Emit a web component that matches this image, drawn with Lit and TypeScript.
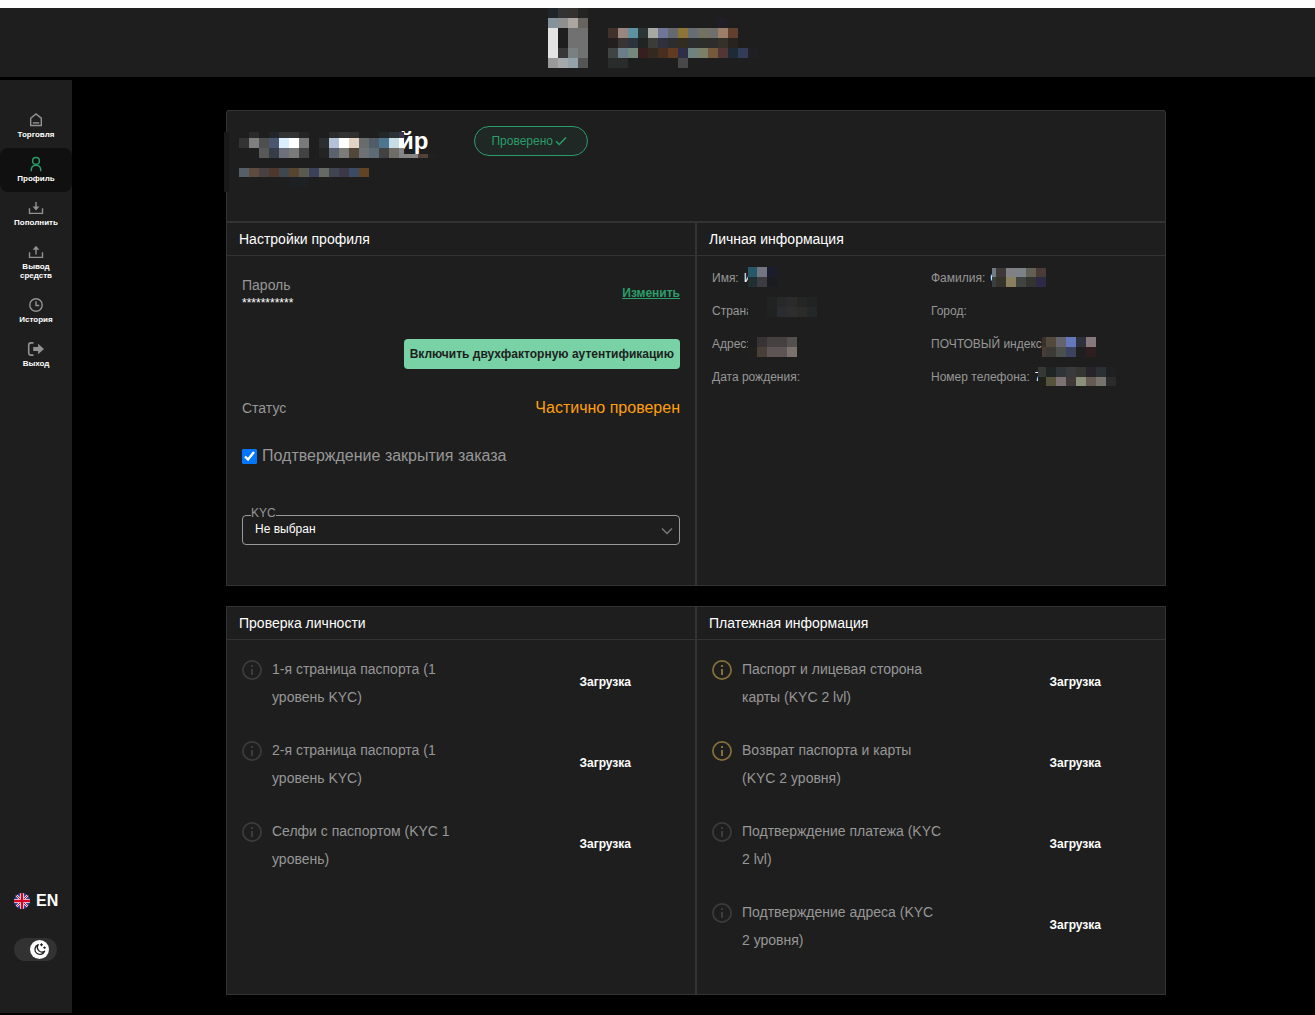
import { LitElement, html, svg, css } from "lit";
import { customElement, property, state } from "lit/decorators.js";
import { classMap } from "lit/directives/class-map.js";

interface Row {
  y: number;
  h: number;
  x?: number;
  /** Width of the first cell; the others are 10 wide. */
  first?: number;
  cells: string;
}

/** Pixelated cover for private data. "-" leaves a cell open. */
@customElement("pixel-cover")
class PixelCover extends LitElement {
  static styles = css`
    :host { display: block; }
    .cover { display: block; }
  `;
  @property({ attribute: false }) rows: Row[] = [];

  render() {
    let width = 0;
    let height = 0;
    const rects: unknown[] = [];
    for (const row of this.rows) {
      let x = row.x ?? 0;
      row.cells.split(" ").forEach((c, i) => {
        const w = i === 0 ? row.first ?? 10 : 10;
        if (c !== "-") rects.push(svg`<rect x=${x} y=${row.y} width=${w} height=${row.h} fill=${"#" + c}></rect>`);
        x += w;
      });
      width = Math.max(width, x);
      height = Math.max(height, row.y + row.h);
    }
    return html`<svg class="cover" width=${width} height=${height} shape-rendering="crispEdges" aria-hidden="true">${rects}</svg>`;
  }
}

const LOGO: Row[] = [
  { y: 0, h: 10, cells: "1f2528 333333 333230 242423" },
  { y: 10, h: 10, cells: "84929c 8f8f8f aba7a0 67645f" },
  { y: 20, h: 20, cells: "e3e3e3 1e1e1e 717171 717171" },
  { y: 40, h: 10, cells: "e3e3e3 383838 7a7f80 717171" },
  { y: 50, h: 10, cells: "999999 a5a9ab 93a2ab 555555" },
  { y: 10, h: 10, x: 169, cells: "211e29" },
  { y: 20, h: 10, x: 60, cells: "41312c 9b867f 5e92a2 2c3536 a9a9a3 6f7699 676971 8e7437 666d74 737161 706f6b 9b7d68 623f2e" },
  { y: 30, h: 10, x: 60, cells: "231f1f 393433 2b343a 212423 3b3c3a 2f303a 2c2d2d 332d21 2b2d2f 2d2d2a 2d2d2c 35302a 28231f" },
  { y: 40, h: 10, x: 60, cells: "404544 6a7e89 74887b 371f20 33291f 482d21 613a22 2e2e49 70827d 7d8069 74593a 523535 1e2b37 323c58 202024" },
  { y: 50, h: 10, x: 60, cells: "2a2c2c 2a2c2c - - - - - 484848" },
];

const NAME: Row[] = [
  { y: 0, h: 60, first: 5, cells: "191919" },
  { y: 0, h: 6, x: 15, cells: "- 2a2a2a - 22262a 333333 333333 252525 - - 2b2b2b 333333 302f2e - - 222729 2b3236" },
  { y: 6, h: 10, x: 15, cells: "333333 7f7f7f 4f4f50 4a5570 dceffc ffffff 7a7a7a - 2b2d30 b3c2d8 fffefd e1d4c4 6a6b6d 515c66 4d758d c8dce6" },
  { y: 0, h: 6, x: 175, first: 5, cells: "3b3350" },
  { y: 6, h: 10, x: 175, first: 5, cells: "ffffff" },
  { y: 16, h: 10, x: 35, cells: "585858 373d48 6d707a 7a7a7a 434343 - 242425 5b626e 7c7b79 53473b 6e7276 5c6b76 424242 706c68" },
  { y: 16, h: 10, x: 175, first: 5, cells: "858585" },
  { y: 22, h: 4, x: 180, first: 14, cells: "858585 52423a 22201f" },
  { y: 36, h: 9, x: 15, cells: "546067 5d4b3f 474241 4e382d 3e474d 584530 5b5a50 3b4158 676a64 40454f 3c3845 3c4b65 614325" },
  { y: 45, h: 10, x: 65, cells: "1d2124 1d2124" },
];

interface Field {
  label: string;
  value?: string;
  cover?: string;
  rows?: Row[];
}

const FIELDS: Field[] = [
  { label: "Имя:", value: "И", cover: "first", rows: [
    { y: 0, h: 10, first: 9, cells: "27586a 737580 1b1d2e" },
    { y: 10, h: 10, first: 9, cells: "1f3035 3c3b41 1b1c22" } ] },
  { label: "Фамилия:", value: "С", cover: "last", rows: [
    { y: 0, h: 9, first: 4, cells: "6f7b80 3e3838 808085 7c8386 625f54 4a3b37" },
    { y: 9, h: 10, first: 4, cells: "3a4040 36332d 88805e 424444 33332f 2d2a47" } ] },
  { label: "Страна:", cover: "country", rows: [
    { y: 0, h: 10, first: 9, cells: "1e1e1e 1e1e1e 212323 272829 2b2b2b 252524 212322" },
    { y: 10, h: 10, first: 9, cells: "1e1e1e 1e1e1e 202222 292c30 2f2d2d 2b2b2a 242727" } ] },
  { label: "Город:" },
  { label: "Адрес:", cover: "address", rows: [
    { y: 0, h: 10, first: 9, cells: "1e1e1e 383235 454141 454141 555050" },
    { y: 10, h: 10, first: 9, cells: "201f1e 483f39 5d5453 5d5453 7a716c" } ] },
  { label: "ПОЧТОВЫЙ индекс:", cover: "zip", rows: [
    { y: 0, h: 10, first: 4, cells: "3a322a 53493c 65646d 6678bd 2f313a 85797e" },
    { y: 10, h: 10, first: 4, cells: "4a3c35 3c3a37 4b4f4d 3d4260 201f1f 2e1e1f" } ] },
  { label: "Дата рождения:" },
  { label: "Номер телефона:", value: "7", cover: "phone", rows: [
    { y: 0, h: 10, first: 8, cells: "373736 1f2424 2f3438 3a3a3a 343531 28232a 2b3035 202020" },
    { y: 10, h: 9, first: 8, cells: "22201d 55543a 7d7273 3f393a 8a9079 665b52 777470 2c2b2b" } ] },
];

const IDENTITY = [
  { text: "1-я страница паспорта (1 уровень KYC)" },
  { text: "2-я страница паспорта (1 уровень KYC)" },
  { text: "Селфи с паспортом (KYC 1 уровень)" },
];

const PAYMENT = [
  { text: "Паспорт и лицевая сторона карты (KYC 2 lvl)", warn: true },
  { text: "Возврат паспорта и карты (KYC 2 уровня)", warn: true },
  { text: "Подтверждение платежа (KYC 2 lvl)" },
  { text: "Подтверждение адреса (KYC 2 уровня)" },
];

const ICONS = {
  home: svg`<path d="M2.700 6.200 8 1.900l5.300 4.300v7.300H2.700z"></path><path d="M4.800 10.900h6.400"></path>`,
  user: svg`<circle cx="8" cy="4.900" r="3.400"></circle><path d="M3.300 15.200v-1.200C3.300 11 5.200 9.400 8 9.400s4.700 1.600 4.700 4.600v1.200"></path>`,
  deposit: svg`<path d="M1.500 8.200v5.200h13V8.200"></path><path d="M8 2v6"></path><path d="M4.600 6.600h6.800L8 10.600z" fill="currentColor" stroke="none"></path>`,
  withdraw: svg`<path d="M1.500 8.200v5.200h13V8.200"></path><path d="M8 4.500v6"></path><path d="M4.600 5.800h6.800L8 1.700z" fill="currentColor" stroke="none"></path>`,
  history: svg`<circle cx="8" cy="8" r="6.200"></circle><path d="M8 4.200v4.300h3.200"></path>`,
  exit: svg`<path d="M5.500 1.900H3Q.700 1.900.700 4.200v7.600Q.700 14.100 3 14.100h2.500" stroke-width="1.600"></path><path d="M5.200 6h4.900V2.700L16 8l-5.900 5.300V10H5.200z" fill="currentColor" stroke="none"></path>`,
};

const NAV = [
  { icon: ICONS.home, text: "Торговля" },
  { icon: ICONS.user, text: "Профиль", active: true },
  { icon: ICONS.deposit, text: "Пополнить" },
  { icon: ICONS.withdraw, text: "Вывод средств" },
  { icon: ICONS.history, text: "История" },
  { icon: ICONS.exit, text: "Выход" },
];

@customElement("side-nav")
class SideNav extends LitElement {
  static styles = css`
    :host {
      display: flex;
      flex-direction: column;
      width: 72px;
      flex: none;
      background: #1e1e1e;
      padding: 24px 0 52px;
      box-sizing: border-box;
      color: #fff;
    }
    .item {
      display: flex;
      flex-direction: column;
      align-items: center;
      gap: 2px;
      padding: 8px 12px 9px;
      border-radius: 8px;
      color: #fff;
      font-size: 8px;
      line-height: 9px;
      font-weight: 700;
      text-align: center;
      text-decoration: none;
    }
    .active { background: #101010; }
    .icon { display: block; width: 16px; height: 16px; color: #929292; overflow: visible; }
    .active .icon { color: #2a9d6a; }
    .foot {
      margin-top: auto;
      display: flex;
      flex-direction: column;
      gap: 25px;
      padding-left: 14px;
      align-items: flex-start;
    }
    .lang {
      display: flex;
      align-items: center;
      gap: 6px;
      border: 0;
      padding: 0;
      background: none;
      color: #fff;
      font: 700 16px/24px "Liberation Sans", Arial, sans-serif;
    }
    .theme {
      display: flex;
      justify-content: flex-end;
      align-items: center;
      width: 43px;
      height: 23px;
      border: 0;
      border-radius: 12px;
      padding: 0 8px;
      background: #323232;
    }
    .knob { display: block; flex: none; }
  `;

  render() {
    return html`
      <nav>
        ${NAV.map((n) => html`<a href="#" class=${classMap({ item: true, active: !!n.active })}>
          <svg class="icon" viewBox="0 0 16 16" fill="none" stroke="currentColor" stroke-width="1.400" aria-hidden="true">${n.icon}</svg>
          <span>${n.text}</span></a>`)}
      </nav>
      <div class="foot">
        <button class="lang" type="button">
          <svg width="16" height="16" viewBox="0 0 16 16" aria-hidden="true">
            <clipPath id="round"><circle cx="8" cy="8" r="8"></circle></clipPath>
            <g clip-path="url(#round)">
              <rect width="16" height="16" fill="#24489a"></rect>
              <path d="M0 0 16 16M16 0 0 16" stroke="#f0f0f0" stroke-width="2.200"></path>
              <path d="M0 0 16 16M16 0 0 16" stroke="#d80027" stroke-width="1"></path>
              <path d="M8 0v16M0 8h16" stroke="#f0f0f0" stroke-width="4"></path>
              <path d="M8 0v16M0 8h16" stroke="#d80027" stroke-width="2.400"></path>
            </g>
          </svg>
          EN
        </button>
        <button class="theme" type="button" aria-label="Тема">
          <svg class="knob" width="19" height="19" viewBox="0 0 19 19" fill="none" stroke="#1e1e1e" aria-hidden="true">
            <circle cx="9.500" cy="9.500" r="9.500" fill="#fff" stroke="none"></circle>
            <path d="M8.300 4.700a5 5 0 1 0 6.300 6.500 4.600 4.600 0 0 1-6.300-6.500z" stroke-width="1.300" stroke-linejoin="round"></path>
            <path d="M11.500 3.200v3M10 4.700h3M14.500 6.400v2.400M13.300 7.600h2.400" stroke-width="1.100"></path>
          </svg>
        </button>
      </div>
    `;
  }
}

interface Doc { text: string; warn?: boolean; }

@customElement("doc-list")
class DocList extends LitElement {
  static styles = css`
    :host { display: block; }
    .list {
      display: flex;
      flex-direction: column;
      gap: 25px;
      margin: 0;
      padding: 0;
      list-style: none;
    }
    .doc { display: flex; gap: 10px; }
    .info { flex: none; width: 20px; height: 20px; margin-top: 5px; color: #3c3c3c; }
    .warn { color: #84703a; }
    .text { width: 202px; font-size: 14px; line-height: 28px; color: #979797; }
    .upload {
      align-self: center;
      margin: 0 49px 2px auto;
      border: 0;
      padding: 0;
      background: none;
      color: #fff;
      font: 700 12px/16px "Liberation Sans", Arial, sans-serif;
    }
  `;
  @property({ attribute: false }) docs: Doc[] = [];

  render() {
    return html`<ul class="list">
      ${this.docs.map((d) => html`<li class="doc">
        <svg class=${classMap({ info: true, warn: !!d.warn })} viewBox="0 0 20 20" aria-hidden="true">
          <circle cx="10" cy="10" r="9.100" fill="none" stroke="currentColor" stroke-width="1.700"></circle>
          <path d="M9 5h2v2H9zM9 9h2v6H9z" fill="currentColor"></path>
        </svg>
        <span class="text">${d.text}</span>
        <button class="upload" type="button">Загрузка</button>
      </li>`)}
    </ul>`;
  }
}

@customElement("app-root")
class AppRoot extends LitElement {
  static styles = css`
    :host {
      display: flex;
      flex-direction: column;
      gap: 3px;
      min-height: 100vh;
      box-sizing: border-box;
      border-top: 8px solid #fdfdfd;
      padding-bottom: 2px;
      background: #000;
      font-family: "Liberation Sans", Arial, sans-serif;
      color: #fff;
    }
    .top { display: flex; justify-content: center; height: 69px; padding-right: 10px; background: #1e1e1e; }
    .shell { display: flex; flex: 1; }
    .page {
      flex: 1;
      display: flex;
      flex-direction: column;
      align-items: center;
      gap: 20px;
      padding: 30px 20px 18px 25px;
    }
    .card {
      display: grid;
      grid-template-columns: 1fr 1fr;
      width: 100%;
      max-width: 940px;
      background: #1e1e1e;
      border-radius: 3px 3px 0 0;
    }
    .person {
      grid-column: 1 / -1;
      position: relative;
      display: flex;
      align-items: flex-start;
      gap: 46px;
      height: 80px;
      padding: 15px 12px;
      border: 1px solid #333;
      border-radius: 3px 3px 0 0;
    }
    .name { margin: 0; padding-left: 160px; font-size: 24px; line-height: 30px; font-weight: 700; }
    .name-cover { position: absolute; left: -3px; top: 21px; }
    .badge {
      display: flex;
      align-items: center;
      gap: 2px;
      height: 28px;
      padding: 0 20px 0 16px;
      border: 1px solid #2a9d6a;
      border-radius: 15px;
      background: #1f2825;
      color: #2a9d6a;
      font-size: 12px;
    }
    .panel { border: 1px solid #333; min-width: 0; }
    .title {
      margin: 0;
      padding: 0 12px;
      border-bottom: 1px solid #333;
      font-size: 14px;
      line-height: 32px;
      font-weight: 400;
    }
    .body { padding: 19px 15px 40px; font-size: 14px; line-height: 20px; color: #979797; }
    .docs { padding: 15px 15px 40px; }
    .line { display: flex; justify-content: space-between; align-items: center; }
    .stars { display: block; font-size: 12px; line-height: 16px; color: #fff; }
    .change { color: #2a9d6a; font-size: 12px; font-weight: 700; }
    .two-factor {
      display: block;
      margin: 28px 0 29px auto;
      height: 30px;
      border: 0;
      border-radius: 4px;
      padding: 0 6px;
      background: #78d2a5;
      color: #1e1e1e;
      font: 700 12px/20px "Liberation Sans", Arial, sans-serif;
    }
    .state { color: #ff9f0a; font-size: 16px; }
    .confirm { display: flex; align-items: center; gap: 5px; margin-top: 28px; font-size: 16px; }
    .tick { width: 15px; height: 15px; margin: 0; }
    .kyc { position: relative; margin-top: 49px; }
    .kyc-label {
      position: absolute;
      left: 9px;
      top: -9px;
      background: #1e1e1e;
      font-size: 12px;
      line-height: 14px;
    }
    .kyc-select {
      display: block;
      appearance: none;
      width: 100%;
      height: 30px;
      border: 1px solid #999;
      border-radius: 4px;
      padding: 0 12px 3px;
      background: #1e1e1e;
      color: #fff;
      font: 12px "Liberation Sans", Arial, sans-serif;
    }
    .chevron { position: absolute; right: 7px; top: 12px; pointer-events: none; }
    .fields {
      display: grid;
      grid-template-columns: 1fr 1fr;
      gap: 13px 0;
      margin: 0;
      padding: 12px 15px;
      font-size: 12px;
      line-height: 20px;
      color: #979797;
    }
    .field { position: relative; display: flex; gap: 5px; white-space: nowrap; }
    .value { margin: 0; color: #fff; }
    .field-cover { position: absolute; top: 0; left: 36px; }
    .first { top: -1px; }
    .country { top: -4px; }
    .address { top: 3px; }
    .last { left: 61px; }
    .zip { left: 111px; top: 3px; }
    .phone { left: 107px; }
  `;
  @state() private confirm = true;

  render() {
    return html`
      <header class="top"><pixel-cover .rows=${LOGO}></pixel-cover></header>
      <div class="shell">
        <side-nav></side-nav>
        <main class="page">
          <div class="card">
            <div class="person">
              <h1 class="name">йр</h1>
              <pixel-cover class="name-cover" .rows=${NAME}></pixel-cover>
              <span class="badge">Проверено
                <svg width="12" height="10" viewBox="0 0 12 10" fill="none" stroke="currentColor" stroke-width="1.500" aria-hidden="true"><path d="M1 5.200 4.200 8.500 11 1.500"></path></svg>
              </span>
            </div>
            <section class="panel">
              <h2 class="title">Настройки профиля</h2>
              <div class="body">
                <div class="line">
                  <div>Пароль<span class="stars">***********</span></div>
                  <a class="change" href="#">Изменить</a>
                </div>
                <button class="two-factor" type="button">Включить двухфакторную аутентификацию</button>
                <div class="line"><span>Статус</span><span class="state">Частично проверен</span></div>
                <label class="confirm">
                  <input class="tick" type="checkbox" .checked=${this.confirm}
                    @change=${(e: Event) => (this.confirm = (e.target as HTMLInputElement).checked)} />
                  Подтверждение закрытия заказа
                </label>
                <div class="kyc">
                  <select class="kyc-select" id="kyc"><option>Не выбран</option></select>
                  <label class="kyc-label" for="kyc">KYC</label>
                  <svg class="chevron" width="12" height="8" viewBox="0 0 12 8" fill="none" stroke="#777" stroke-width="1.500" aria-hidden="true"><path d="M1 1.500 6 6.500 11 1.500"></path></svg>
                </div>
              </div>
            </section>
            <section class="panel">
              <h2 class="title">Личная информация</h2>
              <dl class="fields">
                ${FIELDS.map((f) => html`<div class="field">
                  <dt>${f.label}</dt>
                  <dd class="value">${f.value ?? ""}</dd>
                  ${f.rows ? html`<pixel-cover class="field-cover ${f.cover}" .rows=${f.rows}></pixel-cover>` : ""}
                </div>`)}
              </dl>
            </section>
          </div>
          <div class="card">
            <section class="panel">
              <h2 class="title">Проверка личности</h2>
              <div class="docs"><doc-list .docs=${IDENTITY}></doc-list></div>
            </section>
            <section class="panel">
              <h2 class="title">Платежная информация</h2>
              <div class="docs"><doc-list .docs=${PAYMENT}></doc-list></div>
            </section>
          </div>
        </main>
      </div>
    `;
  }
}
